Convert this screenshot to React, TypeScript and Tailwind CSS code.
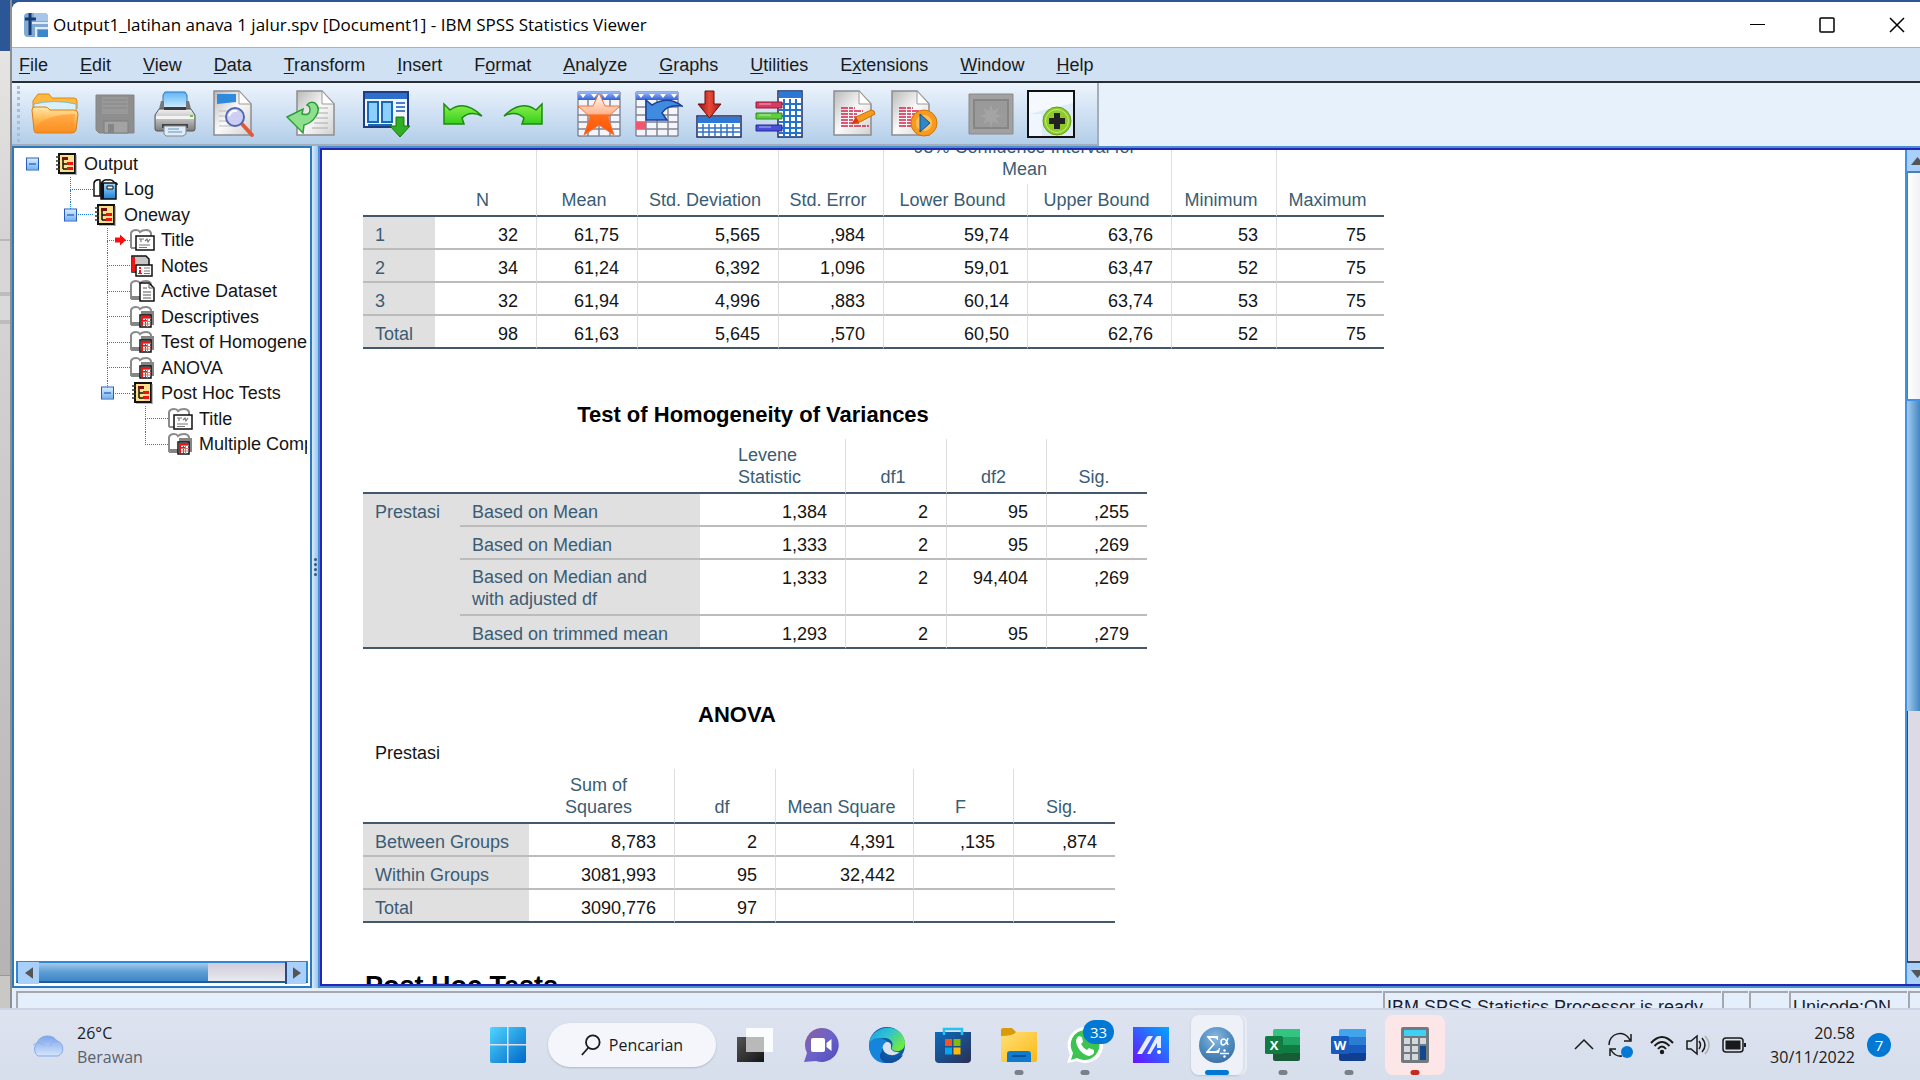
import React from "react";

const UI = "font-['Liberation_Sans',Arial,sans-serif]";
const SEGOE = "font-['Open_Sans','Noto_Sans',sans-serif]";

/* ---------- shared gradients ---------- */

function Defs() {
  return (
    <svg width="0" height="0" className="absolute" aria-hidden="true">
      <defs>
        <linearGradient id="gFolder" x1="0" y1="0" x2="0" y2="1">
          <stop offset="0" stopColor="#ffe9a8" />
          <stop offset="0.5" stopColor="#ffb650" />
          <stop offset="1" stopColor="#f78a1d" />
        </linearGradient>
        <linearGradient id="gBlue" x1="0" y1="0" x2="0" y2="1">
          <stop offset="0" stopColor="#9fdcff" />
          <stop offset="1" stopColor="#1f7fd6" />
        </linearGradient>
        <linearGradient id="gPaper" x1="0" y1="0" x2="0" y2="1">
          <stop offset="0" stopColor="#5fb4f5" />
          <stop offset="1" stopColor="#d8f0ff" />
        </linearGradient>
        <linearGradient id="gPage" x1="0" y1="0" x2="1" y2="1">
          <stop offset="0" stopColor="#b9b9b9" />
          <stop offset="0.5" stopColor="#fafafa" />
          <stop offset="1" stopColor="#d0d0d0" />
        </linearGradient>
        <linearGradient id="gMetal" x1="0" y1="0" x2="0" y2="1">
          <stop offset="0" stopColor="#f1f1f1" />
          <stop offset="0.5" stopColor="#b9b9b9" />
          <stop offset="1" stopColor="#7c7c7c" />
        </linearGradient>
        <linearGradient id="gStar" x1="0" y1="0" x2="0" y2="1">
          <stop offset="0" stopColor="#ffffff" />
          <stop offset="0.5" stopColor="#ffb48c" />
          <stop offset="0.52" stopColor="#ff6d1a" />
          <stop offset="1" stopColor="#ff5200" />
        </linearGradient>
        <linearGradient id="gHead" x1="0" y1="0" x2="0" y2="1">
          <stop offset="0" stopColor="#9db9f5" />
          <stop offset="1" stopColor="#2f60d8" />
        </linearGradient>
        <linearGradient id="gRed" x1="0" y1="0" x2="1" y2="0">
          <stop offset="0" stopColor="#8f1010" />
          <stop offset="0.5" stopColor="#e84a3a" />
          <stop offset="1" stopColor="#a51515" />
        </linearGradient>
        <linearGradient id="gGreen" x1="0" y1="0" x2="0" y2="1">
          <stop offset="0" stopColor="#8aef4c" />
          <stop offset="1" stopColor="#35cf1c" />
        </linearGradient>
        <linearGradient id="gWin" x1="0" y1="0" x2="1" y2="1">
          <stop offset="0" stopColor="#4fd6ff" />
          <stop offset="1" stopColor="#0067c8" />
        </linearGradient>
        <linearGradient id="gCloud" x1="0" y1="0" x2="0" y2="1">
          <stop offset="0" stopColor="#7fa4ea" />
          <stop offset="1" stopColor="#d3e6fb" />
        </linearGradient>
        <linearGradient id="gChat" x1="0" y1="0" x2="1" y2="1">
          <stop offset="0" stopColor="#8f5f9c" />
          <stop offset="0.5" stopColor="#6c63c9" />
          <stop offset="1" stopColor="#5149bd" />
        </linearGradient>
        <linearGradient id="gEdgeTop" x1="0" y1="0" x2="1" y2="0.6">
          <stop offset="0" stopColor="#1a9fe0" />
          <stop offset="0.5" stopColor="#2fc2d2" />
          <stop offset="1" stopColor="#6fea3f" />
        </linearGradient>
        <linearGradient id="gStore" x1="0" y1="0" x2="1" y2="1">
          <stop offset="0" stopColor="#0a6cc0" />
          <stop offset="1" stopColor="#2b2f52" />
        </linearGradient>
        <linearGradient id="gExpl" x1="0" y1="0" x2="1" y2="1">
          <stop offset="0" stopColor="#ffe07a" />
          <stop offset="1" stopColor="#fdb913" />
        </linearGradient>
        <linearGradient id="gMy" x1="0" y1="1" x2="1" y2="0">
          <stop offset="0" stopColor="#6a11ff" />
          <stop offset="1" stopColor="#00a8ff" />
        </linearGradient>
        <radialGradient id="gOrb" cx="0.45" cy="0.3" r="0.8">
          <stop offset="0" stopColor="#8db9de" />
          <stop offset="0.5" stopColor="#5390c4" />
          <stop offset="1" stopColor="#34689c" />
        </radialGradient>
        <linearGradient id="gDark" x1="0" y1="0" x2="1" y2="1">
          <stop offset="0" stopColor="#555" />
          <stop offset="1" stopColor="#151515" />
        </linearGradient>
      </defs>
    </svg>
  );
}

/* ---------- toolbar icons ---------- */

const OpenIcon = () => (
  <svg width="48" height="44" viewBox="0 0 48 44">
    <path d="M4 6l3-4h11l3 4h22q3 0 3 3v8H2V9z" fill="#ffb93c" stroke="#d98a12" />
    <path d="M3 12q20-5 42 0v8H3z" fill="#d9f0ff" stroke="#7db9dd" />
    <path d="M1 18q0-3 3-3h10q3 0 5 3h24q4 0 4 4l-2 16q-1 3-4 3H6q-3 0-3-3z" fill="url(#gFolder)" stroke="#e07c10" />
    <path d="M5 34Q18 22 44 22l-2 15H6z" fill="#ff9228" opacity=".55" />
  </svg>
);
const SaveIcon = () => (
  <svg width="40" height="40" viewBox="0 0 40 40">
    <path d="M1 1h38v38H4l-3-3z" fill="#8e8e8e" stroke="#858585" />
    <path d="M7 3h26v17H7z" fill="#999" />
    <path d="M8 6h24M8 10h24M8 14h24" stroke="#878787" />
    <path d="M9 27h24v12H9z" fill="#a3a3a3" stroke="#7e7e7e" />
    <path d="M13 30h6v9h-6z" fill="#858585" />
  </svg>
);
const PrintIcon = () => (
  <svg width="42" height="46" viewBox="0 0 42 46">
    <path d="M11 1h20l2 3v14H9V4z" fill="url(#gPaper)" stroke="#2d77b3" />
    <path d="M7 10h3v8H5zM35 10h-3v8h5z" fill="#777" />
    <path d="M5 18h32l4 6v14q0 2-2 2H3q-2 0-2-2V24z" fill="url(#gMetal)" stroke="#555" />
    <path d="M10 16h22v3H10z" fill="#3d3d3d" />
    <path d="M2 25h38v3H2z" fill="#f4f4f4" />
    <path d="M36 24h3v2h-3z" fill="#57d03b" />
    <path d="M8 33h26v4H8z" fill="#444" />
    <path d="M10 35h22v8l-3 2H12l-2-2z" fill="#dcecfa" stroke="#888" />
    <path d="M14 38h11M14 41h14" stroke="#6c93bb" />
  </svg>
);
const PageShape = ({ w = 38 }: { w?: number }) => (
  <>
    <path d={`M1 1h${w - 13}l12 13v31H1z`} fill="url(#gPage)" stroke="#8d8d8d" strokeWidth="1.5" />
    <path d={`M${w - 12} 1v13h12z`} fill="#fff" stroke="#9b9b9b" />
  </>
);
const PreviewIcon = () => (
  <svg width="44" height="48" viewBox="0 0 44 48">
    <PageShape />
    <path d="M4 4h19v8L4 14z" fill="#2f8ade" />
    <path d="M6 21h22M6 26h24M6 31h24M6 36h20" stroke="#bbb" />
    <path d="M29 34l10 11" stroke="#e0593a" strokeWidth="4" strokeLinecap="round" />
    <circle cx="22" cy="27" r="9" fill="#c9cbf5" fillOpacity=".9" stroke="#5367b8" strokeWidth="2" />
    <path d="M16 26q2-6 8-5" stroke="#fff" strokeWidth="2" fill="none" />
  </svg>
);
const ExportIcon = () => (
  <svg width="50" height="48" viewBox="0 0 50 48">
    <g transform="translate(10 0)">
      <PageShape />
      <path d="M20 18h12M20 23h12M20 28h12M18 33h14M16 38h16" stroke="#aaa" />
    </g>
    <path d="M1 27L17 19l-1 5q8 2 8-4 0-4-3-5 3-4 8-2 6 5 1 13-4 7-12 9l-1 8z" fill="#8fe08c" stroke="#2d9c3c" strokeWidth="1.5" />
  </svg>
);
const DialogIcon = () => (
  <svg width="48" height="48" viewBox="0 0 48 48">
    <path d="M1 2h44v35H1z" fill="#f2f6fc" stroke="#1e3b86" strokeWidth="2" />
    <path d="M2 3h42v6H2z" fill="#2e6fcb" />
    <path d="M5 12h10v20H5zM19 12h10v20H19z" fill="#8dd0ff" stroke="#1769b5" strokeWidth="2" />
    <path d="M33 13h9M33 17h9M33 21h9" stroke="#4d7dc5" strokeWidth="2" />
    <path d="M5 35h24" stroke="#1769b5" strokeWidth="2" />
    <path d="M33 27h8v9h6L37 47 27 36h6z" fill="#2fae26" stroke="#15760f" />
  </svg>
);
const UndoIcon = ({ flip = false }: { flip?: boolean }) => (
  <svg width="40" height="24" viewBox="0 0 40 24" className={flip ? "-scale-x-100" : ""}>
    <path d="M1 2l6 6Q22-3 39 14q-12-6-20 2l2 6H1z" fill="url(#gGreen)" stroke="#1c8a12" strokeWidth="1.5" />
  </svg>
);
const Grid = ({ head = "url(#gHead)" }: { head?: string }) => (
  <>
    <path d="M1 1h42v44H1z" fill="#f4f5fa" stroke="#5a5f73" />
    <path d="M1 1h42v8H1z" fill={head} />
    <path d="M11 9v36M22 9v36M33 9v36M1 16h42M1 24h42M1 31h42M1 38h42" stroke="#7f8494" strokeWidth="1.5" />
    <path d="M3 3h6l-3 4zM14 3h6l-3 4zM25 3h6l-3 4zM36 3h6l-3 4z" fill="#fff" />
  </>
);
const StarIcon = () => (
  <svg width="44" height="46" viewBox="0 0 44 46">
    <Grid />
    <path d="M22 2l6 13h15L31 26l6 18-15-10L7 44l6-18L1 15h15z" fill="url(#gStar)" stroke="#ef7440" />
  </svg>
);
const GotoCaseIcon = () => (
  <svg width="48" height="46" viewBox="0 0 48 46">
    <Grid />
    <path d="M1 31h10v7H1z" fill="#f0566e" />
    <path d="M11 9l6 5q16-10 30 1-15-2-20 7l5 7H11z" fill="#3f8be0" stroke="#1c3f97" strokeWidth="1.5" />
  </svg>
);
const InsertIcon = () => (
  <svg width="46" height="48" viewBox="0 0 46 48">
    <path d="M1 26h44v21H1z" fill="#fff" stroke="#1d2d66" strokeWidth="1.5" />
    <path d="M2 27h42v6H2z" fill="#2b78d8" />
    <path d="M7 34v12M13 34v12M19 34v12M25 34v12M31 34v12M37 34v12M1 38h44M1 42h44" stroke="#2f72c9" strokeWidth="1.500" />
    <path d="M9 1h9v13h7L13.500 28 2 14h7z" fill="url(#gRed)" stroke="#6d0d0d" />
  </svg>
);
const VariablesIcon = () => (
  <svg width="48" height="48" viewBox="0 0 48 48">
    <path d="M23 1h24v46H23z" fill="#fff" stroke="#1d2d66" strokeWidth="1.500" />
    <path d="M24 2h22v6H24z" fill="#2b78d8" />
    <path d="M29 9v38M35 9v38M41 9v38M24 14h22M24 20h22M24 26h22M24 32h22M24 38h22M24 43h22" stroke="#2472cf" strokeWidth="2" />
    <path d="M1 12h26v6H1z" fill="#d93a62" stroke="#98183a" />
    <path d="M1 23h26v6H1z" fill="#5fce3e" stroke="#2d8a1c" />
    <path d="M1 35h26v6H1z" fill="#4750d6" stroke="#242b96" />
    <path d="M4 14h12M4 25h12M4 37h12" stroke="#fff" opacity=".6" />
  </svg>
);
const RedLines = () => (
  <path d="M8 18h14M8 21h22M8 24h16M8 27h22M8 30h12M8 33h18M8 36h28" stroke="#d2264b" strokeWidth="1.500" strokeDasharray="7 1 4 1" />
);
const EditDocIcon = () => (
  <svg width="44" height="48" viewBox="0 0 44 48">
    <PageShape />
    <RedLines />
    <path d="M19 34l4-7 15-7q4 0 4 4L27 32z" fill="#f49a1e" stroke="#c96f0b" />
    <path d="M19 34l4-7 3 5z" fill="#e0321f" />
  </svg>
);
const RunDocIcon = () => (
  <svg width="48" height="48" viewBox="0 0 48 48">
    <PageShape />
    <RedLines />
    <circle cx="33" cy="33" r="13" fill="#f79a1e" stroke="#cf7508" />
    <circle cx="33" cy="33" r="8" fill="#fbc15c" />
    <path d="M29 24l10 9-10 9z" fill="#2f86c9" stroke="#174f86" />
  </svg>
);
const DesignateIcon = () => (
  <svg width="46" height="42" viewBox="0 0 46 42">
    <path d="M1 1h44v40H1z" fill="#a1a1a1" stroke="#8a8a8a" />
    <path d="M6 7h34v28H6z" fill="#9a9a9a" stroke="#858585" strokeWidth="2" />
    <path d="M23 11l2 7 6-3-3 6 6 2-6 2 3 6-6-3-2 7-2-7-6 3 3-6-6-2 6-2-3-6 6 3z" fill="#a4a4a4" />
  </svg>
);
const AddIcon = () => (
  <svg width="48" height="48" viewBox="0 0 48 48">
    <path d="M1 1h46v46H1z" fill="#dcebfb" stroke="#111" strokeWidth="2" />
    <path d="M2 2h44v11L2 24z" fill="#f3f9ff" />
    <path d="M2 24h13v22H2z" fill="#eff6ff" />
    <circle cx="30" cy="31" r="14" fill="#8ecb2a" stroke="#64a010" />
    <circle cx="30" cy="31" r="11.500" fill="none" stroke="#c6ee7c" />
    <path d="M27 23h6v5h5v6h-5v5h-6v-5h-5v-6h5z" fill="#222" />
  </svg>
);

const toolGroups: { label: string; icon: React.ReactNode }[][] = [
  [
    { label: "Open", icon: <OpenIcon /> },
    { label: "Save", icon: <SaveIcon /> },
    { label: "Print", icon: <PrintIcon /> },
    { label: "Print Preview", icon: <PreviewIcon /> },
  ],
  [{ label: "Export", icon: <ExportIcon /> }],
  [{ label: "Recall dialogs", icon: <DialogIcon /> }],
  [
    { label: "Undo", icon: <UndoIcon /> },
    { label: "Redo", icon: <UndoIcon flip /> },
  ],
  [
    { label: "Go to data", icon: <StarIcon /> },
    { label: "Go to case", icon: <GotoCaseIcon /> },
    { label: "Go to variable", icon: <InsertIcon /> },
    { label: "Variables", icon: <VariablesIcon /> },
  ],
  [
    { label: "Create script", icon: <EditDocIcon /> },
    { label: "Run script", icon: <RunDocIcon /> },
  ],
  [
    { label: "Designate window", icon: <DesignateIcon /> },
    { label: "Add", icon: <AddIcon /> },
  ],
];

/* ---------- outline icons ---------- */

const BookIcon = () => (
  <svg width="21" height="22" viewBox="0 0 21 22">
    <path d="M3 1h16v19H3z" fill="#fde08a" stroke="#111" strokeWidth="2" />
    <path d="M20 2v20H4" stroke="#777" fill="none" />
    <path d="M0 4h4M0 8h4M0 12h4M0 16h4" stroke="#333" strokeWidth="1.500" />
    <path d="M6 4h6v3H6z" fill="#7c0f0f" />
    <path d="M7 7v9M7 11h4M7 16h4" stroke="#111" strokeWidth="1.500" fill="none" />
    <path d="M11 9h6v3h-6zM11 14h6v3h-6z" fill="#f31111" />
  </svg>
);
const BackBook = () => (
  <path d="M1 19V4q1-3 5-3 3 0 4 2 2-2 6-2 4 0 5 3v4M1 19h9" fill="#fff" stroke="#8b8b8b" strokeWidth="2" />
);
const LogIcon = () => (
  <svg width="25" height="22" viewBox="0 0 25 22">
    <path d="M1 18V5q1-4 6-3v16zM9 4q3-3 6-2 4-1 6 2l3 2H9z" fill="#fff" stroke="#111" strokeWidth="1.500" />
    <path d="M8 5h15v16H8z" fill="url(#gBlue)" stroke="#111" strokeWidth="1.500" />
    <path d="M8 5h3v16H8z" fill="#111" />
    <path d="M14 8h6v3h-6z" fill="#fff" stroke="#111" />
  </svg>
);
const TitleIcon = () => (
  <svg width="25" height="22" viewBox="0 0 25 22">
    <BackBook />
    <path d="M6 7h18v14H6z" fill="#fff" stroke="#111" strokeWidth="1.500" />
    <path d="M9 10h5M11 10v3M15 12l2-2 1 3 2-3M9 16h11M9 18.500h8" stroke="#777" strokeWidth="1.200" fill="none" />
  </svg>
);
const NotesIcon = () => (
  <svg width="25" height="22" viewBox="0 0 25 22">
    <path d="M2 1h14l3 3v13H2z" fill="#c9c5c5" stroke="#111" strokeWidth="1.500" />
    <path d="M2 2h3v15H2z" fill="#f01515" />
    <path d="M6 10h16v11H6z" fill="#fff" stroke="#111" strokeWidth="1.500" />
    <path d="M14 13h6M14 16h6M14 18.500h6" stroke="#777" fill="none" />
    <path d="M9 12h2v2H9zM9 15h2v4H9zM8 18h4v1H8z" fill="#f01515" />
  </svg>
);
const DatasetIcon = () => (
  <svg width="25" height="22" viewBox="0 0 25 22">
    <BackBook />
    <path d="M1 16h9v4H3z" fill="#858585" />
    <path d="M10 3h9l5 5v13H10z" fill="#fff" stroke="#111" strokeWidth="1.500" />
    <path d="M19 3v5h5M13 8h4M13 12h8M13 15h8M13 18h8" stroke="#555" fill="none" />
  </svg>
);
const TableIcon = () => (
  <svg width="25" height="22" viewBox="0 0 25 22">
    <BackBook />
    <path d="M11 5h13v14H11zM1 16h9v4H3z" fill="#858585" />
    <path d="M10 9h11v12H10z" fill="#fff" stroke="#111" strokeWidth="1.500" />
    <path d="M11 10h9v2h-9zM11 10h2v10h-2zM15 10h1v10h-1zM11 14h6v1h-6z" fill="#f01515" />
    <path d="M17.500 12v9M13 12.500h8M13 15.500h8M13 18h8" stroke="#c97a7a" />
  </svg>
);

type Node = {
  label: string;
  level: 0 | 1 | 2 | 3;
  icon: React.ReactNode;
  open?: boolean;
  last?: boolean;
  current?: boolean;
};
const outline: Node[] = [
  { label: "Output", level: 0, icon: <BookIcon />, open: true },
  { label: "Log", level: 1, icon: <LogIcon /> },
  { label: "Oneway", level: 1, icon: <BookIcon />, open: true, last: true },
  { label: "Title", level: 2, icon: <TitleIcon />, current: true },
  { label: "Notes", level: 2, icon: <NotesIcon /> },
  { label: "Active Dataset", level: 2, icon: <DatasetIcon /> },
  { label: "Descriptives", level: 2, icon: <TableIcon /> },
  { label: "Test of Homogeneity of Variances", level: 2, icon: <TableIcon /> },
  { label: "ANOVA", level: 2, icon: <TableIcon /> },
  { label: "Post Hoc Tests", level: 2, icon: <BookIcon />, open: true, last: true },
  { label: "Title", level: 3, icon: <TitleIcon /> },
  { label: "Multiple Comparisons", level: 3, icon: <TableIcon />, last: true },
];
const indent = ["ml-[18px]", "ml-[56px]", "ml-[93px]", "ml-[131px]"];

function OutlineRow({ node }: { node: Node }) {
  return (
    <li className={`flex min-h-0 flex-1 items-center ${indent[node.level]}`}>
      <div className={`relative flex h-full shrink-0 flex-col ${node.level === 0 ? "w-[22px]" : "w-[23px]"}`}>
        {node.level > 0 && (
          <>
            <div className="flex-1 border-b border-l border-dotted border-[#1c7cec]" />
            <div className={node.last ? "flex-1" : "flex-1 border-l border-dotted border-[#1c7cec]"} />
          </>
        )}
        {node.open && (
          <button
            aria-label={`Collapse ${node.label}`}
            className="absolute top-1/2 -left-[6px] flex h-[13px] w-[13px] -translate-y-1/2 items-center justify-center border border-[#2a5db5] bg-linear-to-b from-[#d6ebff] to-[#6db4f7]"
          >
            <span className="h-px w-[7px] bg-[#123f92]" />
          </button>
        )}
        {node.current && (
          <svg width="11" height="11" viewBox="0 0 11 11" className="absolute top-1/2 left-[8px] -translate-y-1/2">
            <path d="M0 3h5V0l6 5.500L5 11V8H0z" fill="#fb0d0d" />
          </svg>
        )}
      </div>
      <span className={`flex shrink-0 justify-center ${node.level === 0 ? "w-[24px]" : "w-[25px]"}`}>
        {node.icon}
      </span>
      <span className="ml-[6px] text-[18px] leading-[22px] whitespace-nowrap text-[#151515]">{node.label}</span>
    </li>
  );
}

/* ---------- menu ---------- */

const menus: [string, string, string][] = [
  ["", "F", "ile"],
  ["", "E", "dit"],
  ["", "V", "iew"],
  ["", "D", "ata"],
  ["", "T", "ransform"],
  ["", "I", "nsert"],
  ["F", "o", "rmat"],
  ["", "A", "nalyze"],
  ["", "G", "raphs"],
  ["", "U", "tilities"],
  ["E", "x", "tensions"],
  ["", "W", "indow"],
  ["", "H", "elp"],
];

/* ---------- pivot tables ---------- */

const headCell = "pb-[4px] pr-[6px] align-bottom font-normal text-[#3a5c74]";
const sep = "border-l border-l-[#dedede]";
const label = "bg-[#e0e0e0] pl-3 text-left align-top font-normal text-[#3a5c74]";
const value = "pr-[18px] text-right align-top text-[#151515]";
const heavy = "border-b-2 border-b-[#43586a]";
const light = "border-b-2 border-b-[#bcbcbc]";
const rowPad = "pt-[7px] pb-[2px]";
const tableBase = "table-fixed border-separate border-spacing-0 text-[18px] leading-[22px]";

function Cols({ widths }: { widths: number[] }) {
  return (
    <colgroup>
      {widths.map((w, i) => (
        <col key={i} style={{ width: w }} />
      ))}
    </colgroup>
  );
}

function Values({ items, rule }: { items: string[]; rule: string }) {
  return (
    <>
      {items.map((v, i) => (
        <td key={i} className={`${value} ${rowPad} ${rule} ${i > 0 ? sep : ""}`}>
          {v}
        </td>
      ))}
    </>
  );
}

function Descriptives() {
  const rows: [string, string[]][] = [
    ["1", ["32", "61,75", "5,565", ",984", "59,74", "63,76", "53", "75"]],
    ["2", ["34", "61,24", "6,392", "1,096", "59,01", "63,47", "52", "75"]],
    ["3", ["32", "61,94", "4,996", ",883", "60,14", "63,74", "53", "75"]],
    ["Total", ["98", "61,63", "5,645", ",570", "60,50", "62,76", "52", "75"]],
  ];
  return (
    <table className={`${tableBase} -mt-[22px] w-[1021px]`}>
      <Cols widths={[72, 101, 101, 141, 105, 144, 144, 105, 108]} />
      <thead>
        <tr className="h-[56px]">
          <td rowSpan={2} className={heavy} />
          <th rowSpan={2} className={`${headCell} ${heavy}`}>N</th>
          <th rowSpan={2} className={`${headCell} ${heavy} ${sep}`}>Mean</th>
          <th rowSpan={2} className={`${headCell} ${heavy} ${sep}`}>Std. Deviation</th>
          <th rowSpan={2} className={`${headCell} ${heavy} ${sep}`}>Std. Error</th>
          <th colSpan={2} className={`${headCell} ${sep}`}>95% Confidence Interval for<br />Mean</th>
          <th rowSpan={2} className={`${headCell} ${heavy} ${sep}`}>Minimum</th>
          <th rowSpan={2} className={`${headCell} ${heavy} ${sep}`}>Maximum</th>
        </tr>
        <tr className="h-[33px]">
          <th className={`${headCell} ${heavy} ${sep}`}>Lower Bound</th>
          <th className={`${headCell} ${heavy} ${sep}`}>Upper Bound</th>
        </tr>
      </thead>
      <tbody>
        {rows.map(([name, vals], i) => {
          const rule = i === rows.length - 1 ? heavy : light;
          return (
            <tr key={name}>
              <th scope="row" className={`${label} ${rowPad} ${rule}`}>{name}</th>
              <Values items={vals} rule={rule} />
            </tr>
          );
        })}
      </tbody>
    </table>
  );
}

function Homogeneity() {
  const rows: [React.ReactNode, string[]][] = [
    ["Based on Mean", ["1,384", "2", "95", ",255"]],
    ["Based on Median", ["1,333", "2", "95", ",269"]],
    [<>Based on Median and<br />with adjusted df</>, ["1,333", "2", "94,404", ",269"]],
    ["Based on trimmed mean", ["1,293", "2", "95", ",279"]],
  ];
  return (
    <section className="mt-[53px] w-[784px]">
      <h2 className="mb-[11px] pr-1 text-center text-[22px] leading-[26px] font-bold text-black">Test of Homogeneity of Variances</h2>
      <table className={`${tableBase} w-full`}>
        <Cols widths={[97, 240, 145, 101, 100, 101]} />
        <thead>
          <tr className="h-[55px]">
            <td colSpan={2} className={heavy} />
            <th className={`${headCell} ${heavy}`}>
              <span className="inline-block text-left align-bottom">Levene<br />Statistic</span>
            </th>
            <th className={`${headCell} ${heavy} ${sep}`}>df1</th>
            <th className={`${headCell} ${heavy} ${sep}`}>df2</th>
            <th className={`${headCell} ${heavy} ${sep}`}>Sig.</th>
          </tr>
        </thead>
        <tbody>
          {rows.map(([name, vals], i) => {
            const rule = i === rows.length - 1 ? heavy : light;
            return (
              <tr key={i} className={i === 2 ? "h-[56px]" : ""}>
                {i === 0 && (
                  <th rowSpan={4} scope="rowgroup" className={`${label} ${rowPad} ${heavy}`}>Prestasi</th>
                )}
                <th scope="row" className={`${label} ${i === 2 ? "pt-[6px] pb-[2px]" : rowPad} ${rule}`}>{name}</th>
                <Values items={vals} rule={rule} />
              </tr>
            );
          })}
        </tbody>
      </table>
    </section>
  );
}

function Anova() {
  const rows: [string, string[]][] = [
    ["Between Groups", ["8,783", "2", "4,391", ",135", ",874"]],
    ["Within Groups", ["3081,993", "95", "32,442", "", ""]],
    ["Total", ["3090,776", "97", "", "", ""]],
  ];
  return (
    <section className="mt-[53px] w-[752px]">
      <h2 className="pr-1 text-center text-[22px] leading-[26px] font-bold text-black">ANOVA</h2>
      <p className="mt-[14px] mb-[5px] pl-3 text-[18px] leading-[22px] text-[#151515]">Prestasi</p>
      <table className={`${tableBase} w-full`}>
        <Cols widths={[166, 145, 101, 138, 100, 102]} />
        <thead>
          <tr className="h-[55px]">
            <td className={heavy} />
            <th className={`${headCell} ${heavy}`}>Sum of<br />Squares</th>
            <th className={`${headCell} ${heavy} ${sep}`}>df</th>
            <th className={`${headCell} ${heavy} ${sep}`}>Mean Square</th>
            <th className={`${headCell} ${heavy} ${sep}`}>F</th>
            <th className={`${headCell} ${heavy} ${sep}`}>Sig.</th>
          </tr>
        </thead>
        <tbody>
          {rows.map(([name, vals], i) => {
            const rule = i === rows.length - 1 ? heavy : light;
            return (
              <tr key={name}>
                <th scope="row" className={`${label} ${rowPad} ${rule}`}>{name}</th>
                <Values items={vals} rule={rule} />
              </tr>
            );
          })}
        </tbody>
      </table>
    </section>
  );
}

/* ---------- taskbar icons ---------- */

const WinIcon = () => (
  <svg width="36" height="36" viewBox="0 0 36 36">
    <path d="M2 0h15v17H0V2q0-2 2-2zM18.500 0H34q2 0 2 2v15H18.500zM0 18.500h17V36H2q-2 0-2-2zM18.500 18.500H36V34q0 2-2 2H18.500z" fill="url(#gWin)" />
  </svg>
);
const TaskViewIcon = () => (
  <svg width="36" height="36" viewBox="0 0 36 36">
    <path d="M0 10h27v25H0z" fill="url(#gDark)" />
    <path d="M9 1h27v24H9z" fill="#fff" fillOpacity=".88" />
    <path d="M9 10h18v15H9z" fill="#b9b9b9" />
  </svg>
);
const ChatIcon = () => (
  <svg width="36" height="36" viewBox="0 0 36 36">
    <path d="M18 1a17 17 0 1 1-5 33L1 35l3-9A17 17 0 0 1 18 1z" fill="url(#gChat)" />
    <rect x="8" y="11" width="14" height="14" rx="2" fill="#fff" />
    <path d="M23.500 16l5-4v12l-5-4z" fill="#fff" />
  </svg>
);
const EdgeIcon = () => (
  <svg width="36" height="36" viewBox="0 0 36 36">
    <circle cx="18" cy="18" r="18" fill="#0c59a4" />
    <path d="M0 17C2-3 34-6 36 16c0 7-6 9-10 8-3-1-4-2-3-4 2-5-2-9-8-9C7 11 1 14 0 17z" fill="url(#gEdgeTop)" />
    <path d="M0 18c1-6 7-8 13-6 5 1 9 4 7 8-3-2-8 1-7 6 1 6 6 9 12 8C13 40 0 33 0 18z" fill="#1585dc" />
    <path d="M14 24c-1 6 6 11 20 4-4 7-12 9-17 8-7-3-8-9-3-12z" fill="#1150a0" />
    <path d="M15 17c3-4 8-1 7 3-1 3 4 6 9 5-5 5-15 4-17-3-1-2 0-4 1-5z" fill="#dbe2ef" />
  </svg>
);
const StoreIcon = () => (
  <svg width="36" height="36" viewBox="0 0 36 36">
    <path d="M9 7V2h18v5" fill="none" stroke="#27c1f2" strokeWidth="2.500" />
    <path d="M0 5h36v27q0 4-4 4H4q-4 0-4-4z" fill="url(#gStore)" />
    <path d="M9 8V5M27 8V5" stroke="#27c1f2" strokeWidth="2.500" />
    <path d="M10 12h7v7h-7z" fill="#f35325" />
    <path d="M18.500 12h7v7h-7z" fill="#81bc06" />
    <path d="M10 20.500h7v7h-7z" fill="#05a6f0" />
    <path d="M18.500 20.500h7v7h-7z" fill="#ffba08" />
  </svg>
);
const ExplorerIcon = () => (
  <svg width="36" height="34" viewBox="0 0 36 34">
    <path d="M0 2q0-2 2-2h9l4 4h19q2 0 2 2v8H0z" fill="#d99a0c" />
    <path d="M0 8q13 0 15-4h19q2 0 2 2v26q0 2-2 2H2q-2 0-2-2z" fill="url(#gExpl)" />
    <path d="M6 34V26q0-3 3-3h18q3 0 3 3v8z" fill="#0f7bd0" />
    <path d="M11 28h14" stroke="#0a4f96" strokeWidth="2" />
  </svg>
);
const WhatsAppIcon = () => (
  <svg width="36" height="36" viewBox="0 0 36 36">
    <path d="M18 0a18 18 0 1 1-8 34L0 36l3-9A18 18 0 0 1 18 0z" fill="#fff" />
    <path d="M18 3a15 15 0 1 1-8 28l-6 2 2-7A15 15 0 0 1 18 3z" fill="#3dc351" />
    <path d="M12 9l3 1 1 5-2 2q2 4 6 6l2-2 5 2v3q-2 3-5 3C15 28 9 20 9 13q1-3 3-4z" fill="#fff" />
  </svg>
);
const MyIcon = () => (
  <svg width="36" height="36" viewBox="0 0 36 36">
    <path d="M0 0h36v36H0z" fill="url(#gMy)" />
    <path d="M4 27L14 10q1-1 2-1h4L9 27zM14 27L23 10q1-1 2-1h3v12h-4v-5l-6 10q0 1-1 1z" fill="#e8ecff" />
    <circle cx="26" cy="25" r="2" fill="#fff" />
  </svg>
);
const SpssIcon = () => (
  <svg width="36" height="36" viewBox="0 0 36 36">
    <circle cx="18" cy="18" r="18" fill="url(#gOrb)" />
    <path d="M8 9h11v4h-1q0-2-3-2h-4l5 6-6 7h6q3 0 4-3h1l-1 5H7v-1l7-8-6-7z" fill="#fff" />
    <path d="M29 11q-2 7-5 7-2 0-2-3 0-3 3-3 2 0 4 6" stroke="#fff" strokeWidth="1.500" fill="none" />
    <path d="M21 26.500h9" stroke="#fff" strokeWidth="1.500" />
    <circle cx="25.500" cy="23.500" r="1.200" fill="#fff" />
    <circle cx="25.500" cy="29.500" r="1.200" fill="#fff" />
  </svg>
);
function OfficeIcon({ letter, shades, tile }: { letter: string; shades: string[]; tile: string }) {
  return (
    <svg width="36" height="34" viewBox="0 0 36 34">
      <path d="M10 1h25v8H8V3q0-2 2-2z" fill={shades[0]} />
      <path d="M8 9h27v8H8z" fill={shades[1]} />
      <path d="M8 17h27v8H8z" fill={shades[2]} />
      <path d="M8 25h27v6q0 2-2 2H10q-2 0-2-2z" fill={shades[3]} />
      <rect x="0" y="8" width="18" height="18" rx="1.500" fill={tile} />
      <text x="9" y="22" textAnchor="middle" fontSize="13" fontWeight="700" fill="#fff" fontFamily="Open Sans, sans-serif">
        {letter}
      </text>
    </svg>
  );
}
const CalcIcon = () => (
  <svg width="28" height="36" viewBox="0 0 28 36">
    <rect width="28" height="36" rx="2" fill="#727a80" />
    <path d="M3 3h22v6H3z" fill="#3fd0f5" />
    <path d="M3 11h6v6H3zM11 11h6v6h-6zM19 11h6v6h-6zM3 19h6v6H3zM11 19h6v6h-6zM3 27h6v6H3zM11 27h6v6h-6z" fill="#d3d8dc" />
    <path d="M19 19h6v14h-6z" fill="#12488c" />
  </svg>
);

function TaskItem({
  label: name,
  children,
  mark,
  tile = "",
}: {
  label: string;
  children: React.ReactNode;
  mark?: string;
  tile?: string;
}) {
  return (
    <button aria-label={name} className="relative flex h-[72px] w-[66px] items-center justify-center">
      <span className={`flex h-[60px] items-center justify-center rounded-lg ${tile}`}>{children}</span>
      {mark && <span className={`absolute bottom-[6px] left-1/2 h-[5px] -translate-x-1/2 rounded-full ${mark}`} />}
    </button>
  );
}

const dot = "w-[9px] bg-[#7b7f88]";

function Taskbar() {
  return (
    <footer className={`${SEGOE} flex h-[72px] shrink-0 items-center border-t-2 border-[#ccd3e2] bg-linear-to-b from-[#dde3ef] to-[#d7deec]`}>
      <button className="ml-[30px] flex w-[460px] items-center gap-[11px] text-left text-[16px] leading-6">
        <svg width="36" height="24" viewBox="0 0 36 24">
          <path d="M8 23a7 8 0 0 1-1-13 11 10 0 0 1 20-2 8 8 0 0 1 1 15z" fill="url(#gCloud)" stroke="#86a9e6" />
          <path d="M3 12q6-5 12 1M20 13q2-5 8-5" stroke="#88aaea" fill="none" opacity=".7" />
        </svg>
        <span>
          <span className="block text-[#1b1b1b]">26°C</span>
          <span className="block text-[#5c6068]">Berawan</span>
        </span>
      </button>
      <button aria-label="Start"><WinIcon /></button>
      <button className="mr-[6px] ml-[22px] flex h-11 w-[168px] items-center justify-center gap-2 rounded-full bg-[#f4f6fb] text-[16px] text-[#1b1b1b] shadow-[0_1px_2px_rgba(120,130,150,0.4)]">
        <svg width="20" height="22" viewBox="0 0 22 24">
          <circle cx="13" cy="9" r="7.500" fill="none" stroke="#1a1a1a" strokeWidth="2" />
          <path d="M8 15l-7 8" stroke="#1a1a1a" strokeWidth="2" />
        </svg>
        Pencarian
      </button>
      <TaskItem label="Task View"><TaskViewIcon /></TaskItem>
      <TaskItem label="Chat"><ChatIcon /></TaskItem>
      <TaskItem label="Edge"><EdgeIcon /></TaskItem>
      <TaskItem label="Store"><StoreIcon /></TaskItem>
      <TaskItem label="File Explorer" mark={dot}><ExplorerIcon /></TaskItem>
      <TaskItem label="WhatsApp" mark={dot}>
        <WhatsAppIcon />
        <span className="absolute top-[11px] left-[31px] flex h-6 w-[31px] items-center justify-center rounded-full bg-[#0078d4] text-[15px] text-white">33</span>
      </TaskItem>
      <TaskItem label="MyASUS"><MyIcon /></TaskItem>
      <TaskItem
        label="SPSS"
        mark="w-[24px] bg-[#0078d4]"
        tile="w-[52px] bg-[#eef1f8] shadow-[2px_0_0_#dbe1ed,4px_0_0_#e8ecf5,0_1px_2px_#b9c1d0]"
      >
        <SpssIcon />
      </TaskItem>
      <TaskItem label="Excel" mark={dot}>
        <OfficeIcon letter="X" shades={["#33c481", "#21a366", "#107c41", "#185c37"]} tile="#107c41" />
      </TaskItem>
      <TaskItem label="Word" mark={dot}>
        <OfficeIcon letter="W" shades={["#41a5ee", "#2b7cd3", "#185abd", "#103f91"]} tile="#185abd" />
      </TaskItem>
      <TaskItem label="Calculator" mark="w-[9px] bg-[#c42b1c]" tile="w-[60px] bg-[#fde6e8]">
        <CalcIcon />
      </TaskItem>
      <div className="mr-[29px] ml-auto flex items-center text-[#1a1a1a]">
        <button aria-label="Show hidden icons">
          <svg width="20" height="24" viewBox="0 0 20 24"><path d="M1 16l9-9 9 9" fill="none" stroke="currentColor" strokeWidth="1.500" /></svg>
        </button>
        <svg className="ml-[14px]" width="26" height="26" viewBox="0 0 26 26">
          <path d="M1 13a11 11 0 0 1 21-5M23 2v7h-7M2 24v-7h6M3 18q4 7 11 6" fill="none" stroke="currentColor" strokeWidth="1.500" />
          <circle cx="19" cy="20" r="6" fill="#0078d4" />
        </svg>
        <svg className="ml-4" width="24" height="20" viewBox="0 0 24 20">
          <path d="M1 8q11-12 22 0M4.500 11q7.500-8 15 0M8 14q4-5 8 0" fill="none" stroke="currentColor" strokeWidth="2" />
          <circle cx="12" cy="17" r="2.200" fill="currentColor" />
        </svg>
        <svg className="ml-3" width="24" height="22" viewBox="0 0 24 22">
          <path d="M1 7h4l6-5v18l-6-5H1z" fill="none" stroke="currentColor" strokeWidth="1.500" />
          <path d="M13 7q3 4 0 8M16 4q6 7 0 14" fill="none" stroke="currentColor" strokeWidth="1.500" />
          <path d="M19 2q8 9 0 18" fill="none" stroke="#a9aeb8" strokeWidth="1.500" />
        </svg>
        <svg className="ml-3" width="24" height="18" viewBox="0 0 24 18">
          <rect x="1" y="2" width="20" height="14" rx="3" fill="none" stroke="currentColor" strokeWidth="1.500" />
          <rect x="3.500" y="4.500" width="15" height="9" fill="currentColor" />
          <path d="M22 7h2v4h-2z" fill="currentColor" />
        </svg>
        <div className="ml-6 text-right text-[16px] leading-6">
          <div>20.58</div>
          <div>30/11/2022</div>
        </div>
        <span className="ml-3 flex h-6 w-6 items-center justify-center rounded-full bg-[#0078d4] text-[15px] text-white">7</span>
      </div>
    </footer>
  );
}

/* ---------- window ---------- */

const statusCell = "h-[24px] shrink-0 overflow-hidden border-t-2 border-l-2 border-[#a5a9af] pl-[2px] text-[18px] leading-[22px] whitespace-nowrap text-[#1c1c30] pt-[3px]";
const arrowBtn = "flex h-[22px] w-[21px] shrink-0 items-center justify-center bg-[#a9d0fb]";

export default function App() {
  return (
    <div className={`${UI} flex h-screen flex-col overflow-hidden bg-[#dbe1ee]`}>
      <Defs />
      <div className="flex min-h-0 flex-1 bg-[#2c5797]">
        <div className="flex w-3 shrink-0 flex-col border-r-2 border-[#8d8f93]">
          <div className="h-[51px]" />
          <div className="h-[190px] border-b-2 border-[#b9b9b8] bg-linear-to-b from-[#e6e5e3] to-[#d5d4d2]" />
          <div className="h-[51px] bg-[#d8d7d5]" />
          <div className="h-8 border-y-4 border-[#bdbdbc] bg-[#d9d9d9]" />
          <div className="flex-1 border-b border-[#999] bg-linear-to-b from-[#d4d3d1] to-[#b5b4b3]" />
          <div className="h-8 bg-[#c9c8c5]" />
        </div>

        <div className="mt-[2px] flex min-w-0 flex-1 flex-col overflow-hidden rounded-tl-lg bg-[#e6f1fc]">
          <header className="flex h-[45px] shrink-0 items-center bg-white pl-3">
            <svg width="24" height="24" viewBox="0 0 24 24">
              <rect width="24" height="24" rx="4" fill="#7fa9d3" />
              <path d="M10 0h10q4 0 4 4v4H10z" fill="#a5c6e6" />
              <path d="M8 10h16M12 14v10M12 15h12" stroke="#fff" strokeWidth="1.500" />
              <path d="M14 17h10v7H14z" fill="#3c86cc" />
              <path d="M1 6h11M6 0v22" stroke="#173a75" strokeWidth="3" />
            </svg>
            <h1 className={`${SEGOE} ml-[5px] text-[17px] whitespace-nowrap text-black`}>
              Output1_latihan anava 1 jalur.spv [Document1] - IBM SPSS Statistics Viewer
            </h1>
            <div className="ml-auto flex gap-6">
              <button aria-label="Minimize" className="flex h-8 w-[46px] items-center justify-center">
                <span className="h-px w-[15px] bg-black" />
              </button>
              <button aria-label="Maximize" className="flex h-8 w-[46px] items-center justify-center">
                <svg width="16" height="16" viewBox="0 0 16 16"><rect x="1" y="1" width="14" height="14" rx="1" fill="none" stroke="#000" strokeWidth="1.500" /></svg>
              </button>
              <button aria-label="Close" className="flex h-8 w-[46px] items-center justify-center">
                <svg width="16" height="16" viewBox="0 0 16 16"><path d="M1 1l14 14M15 1L1 15" stroke="#000" strokeWidth="1.500" /></svg>
              </button>
            </div>
          </header>

          <nav className="flex h-[36px] shrink-0 items-center gap-8 border-t border-b-2 border-t-[#a7b4c2] border-b-[#2a2d31] bg-[#cfe1f2] pl-[7px]">
            {menus.map(([a, key, b]) => (
              <button key={key + b} className="text-[18px] leading-[22px] text-[#1a1a1a]">
                {a}
                <span className="underline underline-offset-2">{key}</span>
                {b}
              </button>
            ))}
          </nav>

          <div className="flex h-[63px] shrink-0">
            <div className="flex items-center border-r-2 border-b-2 border-[#a4adb8] bg-linear-to-b from-[#edf4fd] to-[#b3cee9]">
              <span className="ml-[5px] h-[56px] border-l-[3px] border-dotted border-[#a9bdd3]" />
              <div className="flex gap-4 pt-px pr-[16px] pl-[5px]">
                {toolGroups.map((group, i) => (
                  <div key={i} className="flex">
                    {group.map((t) => (
                      <button key={t.label} aria-label={t.label} className="flex h-[52px] w-[60px] items-center justify-center">
                        {t.icon}
                      </button>
                    ))}
                  </div>
                ))}
              </div>
            </div>
          </div>

          <main className="flex min-h-0 flex-1">
            <aside className="flex w-[300px] shrink-0 flex-col overflow-hidden border-2 border-[#2b79c0] bg-white">
              <ul className="mt-[3px] mr-[3px] flex h-[306px] shrink-0 flex-col overflow-hidden">
                {outline.map((n, i) => (
                  <OutlineRow key={i} node={n} />
                ))}
              </ul>
              <div className="mx-[2px] mt-auto mb-[3px] flex h-[22px] border-2 border-[#2f86dd] border-b-[#1d5a9e] bg-[#dcdae6]">
                <button aria-label="Scroll left" className={`${arrowBtn} -my-px`}>
                  <svg width="8" height="12" viewBox="0 0 9 13"><path d="M9 0v13L0 6.500z" fill="#555" /></svg>
                </button>
                <div className="w-[169px] bg-linear-to-b from-[#a5cbea] via-[#5b9dd3] to-[#3f86c6]" />
                <div className="flex-1 bg-linear-to-b from-[#cfcddb] to-[#e8e8ee]" />
                <button aria-label="Scroll right" className={`${arrowBtn} -my-px border-l-2 border-[#2c4a80]`}>
                  <svg width="8" height="12" viewBox="0 0 9 13"><path d="M0 0v13l9-6.500z" fill="#555" /></svg>
                </button>
              </div>
            </aside>

            <div className="flex w-[6px] shrink-0 flex-col items-center justify-center gap-[2px] bg-linear-to-r from-[#dceaf9] to-[#93c4f8]">
              {[0, 1, 2, 3].map((i) => (
                <span key={i} className="h-[3px] w-[3px] rounded-full bg-[#35557d]" />
              ))}
            </div>

            <div className="flex min-w-0 flex-1 border-y-2 border-l-2 border-[#4a90cf]">
              <div className="flex min-w-0 flex-1 border-y-2 border-l-2 border-[#2426b8] bg-white">
                <div className="min-w-0 flex-1 overflow-hidden pl-[41px]">
                  <Descriptives />
                  <Homogeneity />
                  <Anova />
                  <h1 className="mt-[47px] pl-[2px] text-[27px] leading-8 font-bold text-black">Post Hoc Tests</h1>
                </div>
                <div className="flex w-[15px] shrink-0 flex-col overflow-hidden border-l-2 border-[#3f93e6]">
                  <button aria-label="Scroll up" className="flex h-[21px] w-[20px] shrink-0 items-center justify-center bg-[#a9d0fb]">
                    <svg width="13" height="8" viewBox="0 0 13 8"><path d="M0 8h13L6.500 0z" fill="#555" /></svg>
                  </button>
                  <div className="flex-[227] border-t-2 border-l border-[#4b7fb5] bg-linear-to-r from-white to-[#f1f1f6]" />
                  <div className="flex-[310] border-t-2 border-[#3f93e6] bg-linear-to-r from-[#a5cbea] to-[#3f86c6]" />
                  <div className="flex-[251] border-b-2 border-l border-[#3c4a6a] bg-[#dcdae4]" />
                  <button aria-label="Scroll down" className="flex h-[21px] w-[20px] shrink-0 items-center justify-center bg-[#a9d0fb]">
                    <svg width="13" height="8" viewBox="0 0 13 8"><path d="M0 0h13L6.500 8z" fill="#555" /></svg>
                  </button>
                </div>
              </div>
            </div>
          </main>

          <div className="flex h-[20px] shrink-0 items-start gap-px overflow-hidden bg-[#e4effb] pt-[3px] pl-1">
            <div className={`${statusCell} min-w-0 flex-1 shrink`} />
            <div className={`${statusCell} w-[338px]`}>IBM SPSS Statistics Processor is ready</div>
            <div className={`${statusCell} w-[26px]`} />
            <div className={`${statusCell} w-[39px]`} />
            <div className={`${statusCell} w-[118px]`}>Unicode:ON</div>
            <div className={`${statusCell} w-[12px]`} />
          </div>
        </div>
      </div>
      <Taskbar />
    </div>
  );
}
